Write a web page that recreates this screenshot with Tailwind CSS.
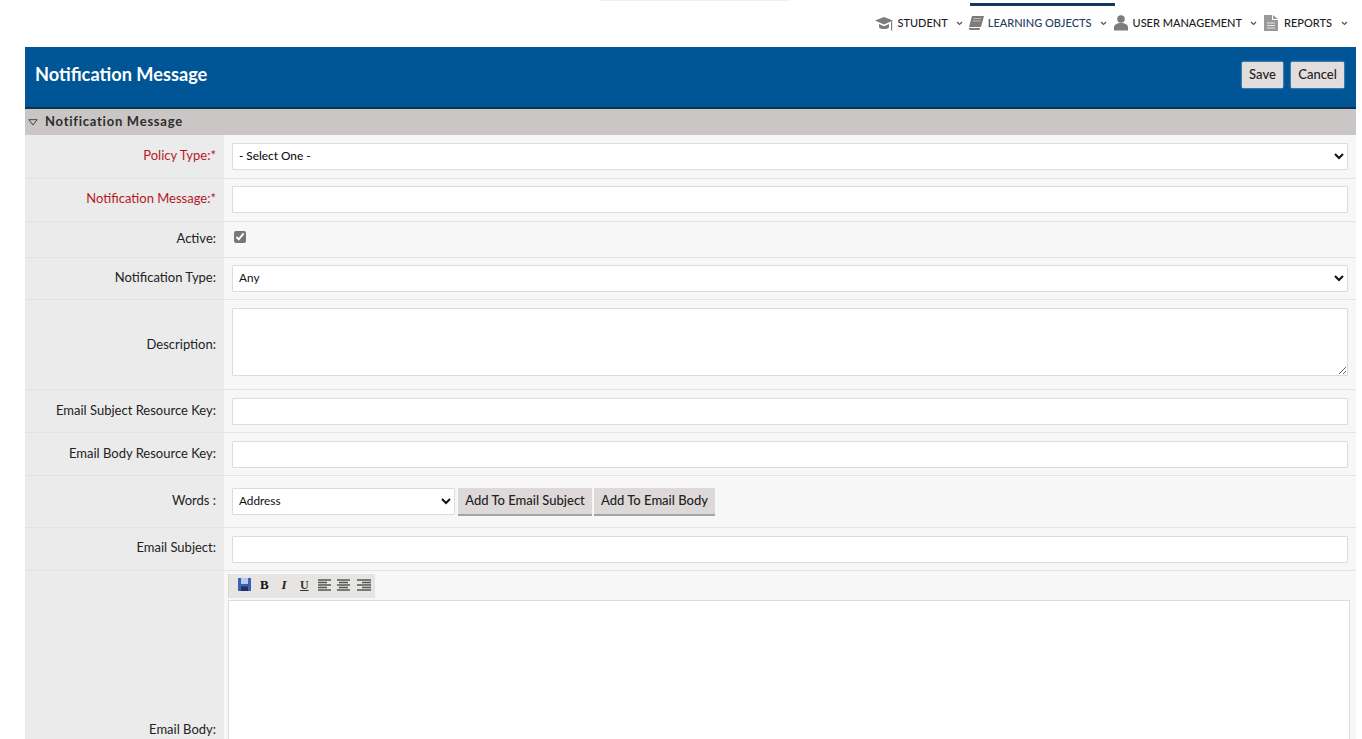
<!DOCTYPE html>
<html lang="en">

<head>
  <meta charset="UTF-8">
  <meta name="viewport" content="width=device-width, initial-scale=1.0">
  <title>Notification Message</title>
  <script src="https://cdn.jsdelivr.net/npm/@tailwindcss/browser@4"></script>
</head>

<body class="h-screen overflow-hidden bg-white font-['Lato','Open_Sans',sans-serif] text-[13px] text-[#222]">

  <!-- Top nav -->
  <div class="relative h-[47px]">
    <div class="absolute left-[600px] top-0 h-px w-[190px] bg-[#f0f0f0]"></div>
    <div class="absolute left-[970px] top-[3px] h-[3px] w-[145px] bg-[#17375e]"></div>
    <div class="flex h-[47px] items-center justify-end pr-[14px] pb-px text-[11px] font-medium text-[#1c1c1c]">
      <svg class="mr-[4px] h-[18px] w-[18px]" viewBox="0 0 18 18" fill="#7c7c7c"><path d="M9 3l9 3.500-9 4-9-4z"/><path d="M4 10v3.500c2 2 8 2 10 0V10l-5 2.200z"/><path d="M16 7.500h1.200v9H16z"/></svg>
      <span>STUDENT</span>
      <svg class="mr-[5px] ml-[8px] h-[5px] w-[7px]" viewBox="0 0 7 5" fill="none" stroke="#555" stroke-width="1.200"><path d="M1 1l2.500 2.500L6 1"/></svg>
      <svg class="mr-[4px] h-[16px] w-[16px]" viewBox="0 0 16 16" fill="#7c7c7c"><path d="M4 1h12l-3 11H1z"/><path d="M1 13h11l-.5 2H2.500C1 15 .5 14 1 13z"/><path d="M5.500 3.500h7.500M5 6h7.500" stroke="#ccc" stroke-width=".8"/></svg>
      <span class="text-[#22405f]">LEARNING OBJECTS</span>
      <svg class="mr-[7px] ml-[8px] h-[5px] w-[7px]" viewBox="0 0 7 5" fill="none" stroke="#555" stroke-width="1.200"><path d="M1 1l2.500 2.500L6 1"/></svg>
      <svg class="mr-[5px] h-[16px] w-[14px]" viewBox="0 0 14 16" fill="#7c7c7c"><circle cx="7" cy="4" r="3.800"/><path d="M0 15.500v-3C0 9.500 3 8 7 8s7 1.500 7 4.500v3z"/></svg>
      <span>USER MANAGEMENT</span>
      <svg class="mr-[7px] ml-[8px] h-[5px] w-[7px]" viewBox="0 0 7 5" fill="none" stroke="#555" stroke-width="1.200"><path d="M1 1l2.500 2.500L6 1"/></svg>
      <svg class="mr-[6px] h-[16px] w-[14px]" viewBox="0 0 14 16" fill="#999"><path d="M0 0h8v5h6v11H0z"/><path d="M9 0l5 4H9z"/><path d="M3 8h8M3 10.500h8M3 13h8" stroke="#e6e6e6" stroke-width="1"/></svg>
      <span>REPORTS</span>
      <svg class="ml-[9px] h-[5px] w-[7px]" viewBox="0 0 7 5" fill="none" stroke="#555" stroke-width="1.200"><path d="M1 1l2.500 2.500L6 1"/></svg>
    </div>
  </div>

  <div class="mr-[6px] ml-[25px]">
    <!-- Title bar -->
    <div class="flex h-[62px] items-center justify-between border-b-2 border-[#0f3252] bg-[#005596] pr-[12px] pl-[10px]">
      <h1 class="pb-[4px] text-[18.2px] font-bold text-white">Notification Message</h1>
      <div class="mb-[5px] flex gap-[8px]">
        <button class="h-[26px] w-[41px] rounded-[1px] bg-[#e1dedd] text-[13px] font-medium text-[#222] shadow-[0_0_2px_#cfe3f2]">Save</button>
        <button class="h-[26px] w-[53px] rounded-[1px] bg-[#e1dedd] text-[13px] font-medium text-[#222] shadow-[0_0_2px_#cfe3f2]">Cancel</button>
      </div>
    </div>

    <!-- Section header -->
    <div class="flex h-[26px] items-center bg-[#c9c6c5] pl-[3px] text-[13px] font-bold tracking-[0.75px] text-[#2d2d2d]">
      <svg class="mr-[7px] h-[7px] w-[10px]" viewBox="0 0 10 7" fill="none" stroke="#444" stroke-width="1"><path d="M.8.700h8.400L5 6z"/></svg>
      Notification Message
    </div>

    <!-- Form rows -->
    <div class="flex h-[44px] border-b border-[#e3e3e3]">
      <label class="flex w-[199px] shrink-0 items-center justify-end bg-[#ebebeb] pr-[8px] pb-[2px] text-[#b5191f]">Policy Type:*</label>
      <div class="flex flex-1 items-center bg-[#f7f7f7] pr-[8px] pl-[8px]">
        <select class="h-[27px] w-full rounded-[1px] border border-[#dcdcdc] bg-white px-[2px] pb-[2px] text-[11.8px] font-medium text-[#111]"><option>- Select One -</option></select>
      </div>
    </div>
    <div class="flex h-[43px] border-b border-[#e3e3e3]">
      <label class="flex w-[199px] shrink-0 items-center justify-end bg-[#ebebeb] pr-[8px] pb-[3px] text-[#b5191f]">Notification Message:*</label>
      <div class="flex flex-1 items-center bg-[#f7f7f7] pr-[8px] pb-px pl-[8px]">
        <input type="text" class="h-[27px] w-full rounded-[1px] border border-[#dcdcdc] bg-white">
      </div>
    </div>
    <div class="flex h-[36px] border-b border-[#e3e3e3]">
      <label class="flex w-[199px] shrink-0 items-center justify-end bg-[#ebebeb] pr-[8px] pb-[2px]">Active:</label>
      <div class="flex flex-1 items-center bg-[#f7f7f7] pr-[8px] pb-[5px] pl-[10px]">
        <input type="checkbox" checked class="h-[12px] w-[12px] accent-[#777]">
      </div>
    </div>
    <div class="flex h-[42px] border-b border-[#e3e3e3]">
      <label class="flex w-[199px] shrink-0 items-center justify-end bg-[#ebebeb] pr-[8px] pb-[1px]">Notification Type:</label>
      <div class="flex flex-1 items-center bg-[#f7f7f7] pr-[8px] pl-[8px]">
        <select class="h-[27px] w-full rounded-[1px] border border-[#dcdcdc] bg-white px-[2px] pb-[2px] text-[11.8px] text-[#111]"><option>Any</option></select>
      </div>
    </div>
    <div class="flex h-[90px] border-b border-[#e3e3e3]">
      <label class="flex w-[199px] shrink-0 items-center justify-end bg-[#ebebeb] pr-[8px]">Description:</label>
      <div class="flex-1 bg-[#f7f7f7] pt-[8px] pr-[8px] pl-[8px]">
        <textarea class="block h-[68px] w-full rounded-[1px] border border-[#dcdcdc] bg-white"></textarea>
      </div>
    </div>
    <div class="flex h-[43px] border-b border-[#e3e3e3]">
      <label class="flex w-[199px] shrink-0 items-center justify-end bg-[#ebebeb] pr-[8px]">Email Subject Resource Key:</label>
      <div class="flex flex-1 items-start bg-[#f7f7f7] pt-[8px] pr-[8px] pl-[8px]">
        <input type="text" class="h-[27px] w-full rounded-[1px] border border-[#dcdcdc] bg-white">
      </div>
    </div>
    <div class="flex h-[43px] border-b border-[#e3e3e3]">
      <label class="flex w-[199px] shrink-0 items-center justify-end bg-[#ebebeb] pr-[8px]">Email Body Resource Key:</label>
      <div class="flex flex-1 items-start bg-[#f7f7f7] pt-[8px] pr-[8px] pl-[8px]">
        <input type="text" class="h-[27px] w-full rounded-[1px] border border-[#dcdcdc] bg-white">
      </div>
    </div>
    <div class="flex h-[52px] border-b border-[#e3e3e3]">
      <label class="flex w-[199px] shrink-0 items-center justify-end bg-[#ebebeb] pr-[8px] pb-[2px]">Words :</label>
      <div class="flex flex-1 items-start gap-[3px] bg-[#f7f7f7] pt-[12px] pl-[8px]">
        <select class="h-[27px] w-[223px] rounded-[1px] border border-[#dcdcdc] bg-white px-[2px] pb-[2px] text-[11.8px] text-[#111]"><option>Address</option></select>
        <button class="h-[28px] w-[134px] border-b-2 border-[#a5a3a3] bg-[#dcd9d8] text-[13px] font-medium text-[#222]">Add To Email Subject</button>
        <button class="-ml-px h-[28px] w-[121px] border-b-2 border-[#a5a3a3] bg-[#dcd9d8] text-[13px] font-medium text-[#222]">Add To Email Body</button>
      </div>
    </div>
    <div class="flex h-[43px] border-b border-[#e3e3e3]">
      <label class="flex w-[199px] shrink-0 items-center justify-end bg-[#ebebeb] pr-[8px] pb-[2px]">Email Subject:</label>
      <div class="flex flex-1 items-start bg-[#f7f7f7] pt-[8px] pr-[8px] pl-[8px]">
        <input type="text" class="h-[27px] w-full rounded-[1px] border border-[#dcdcdc] bg-white">
      </div>
    </div>
    <div class="flex h-[317px]">
      <label class="flex w-[199px] shrink-0 items-center justify-end bg-[#ebebeb] pr-[8px]">Email Body:</label>
      <div class="flex-1 bg-[#f7f7f7] pt-[3px] pr-[6px] pl-[4px]">
        <div class="flex h-[24px] w-[147px] items-center bg-[#e6e5e1] pb-[3px] pl-[10px] shadow-[inset_1px_0_0_#d8d8d8]">
          <svg class="mr-[9px] h-[13px] w-[13px]" viewBox="0 0 13 13"><path d="M0 0h13v13H0z" fill="#3f5fb5"/><path d="M3 0h7v6H3z" fill="#b9c7ea"/><path d="M3 8.500h7V13H3z" fill="#1e2f6a"/></svg>
          <span class="mr-[12px] w-[8px] font-['Liberation_Serif',serif] text-[13px] leading-none font-bold text-[#111]">B</span>
          <span class="mr-[12px] w-[8px] text-center font-['Liberation_Serif',serif] text-[13px] leading-none font-bold text-[#222] italic">I</span>
          <span class="mr-[10px] w-[8px] font-['Liberation_Serif',serif] text-[12px] leading-none font-bold text-[#333] underline">U</span>
          <svg class="mr-[6px] h-[12px] w-[13px]" viewBox="0 0 13 12" stroke="#555" stroke-width="1.500"><path d="M0 1h13M0 3.500h9M0 6h13M0 8.500h9M0 11h13"/></svg>
          <svg class="mr-[7px] h-[12px] w-[13px]" viewBox="0 0 13 12" stroke="#555" stroke-width="1.500"><path d="M0 1h13M2 3.500h9M0 6h13M2 8.500h9M0 11h13"/></svg>
          <svg class="h-[12px] w-[14px]" viewBox="0 0 14 12" stroke="#555" stroke-width="1.500"><path d="M0 1h14M5 3.500h9M0 6h14M5 8.500h9M0 11h14"/></svg>
        </div>
        <div class="mt-[2px] h-[400px] border border-[#dcdcdc] bg-white"></div>
      </div>
    </div>
  </div>
</body>

</html>
